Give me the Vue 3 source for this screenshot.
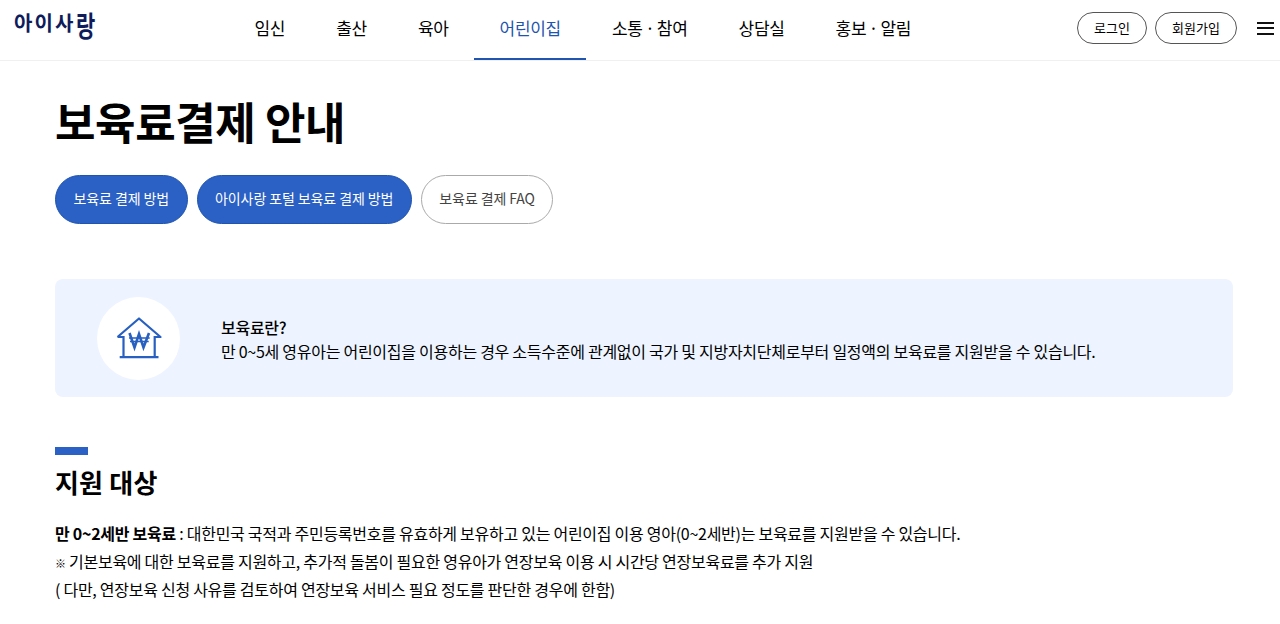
<script setup>
const menu = [
  { t: '임신' }, { t: '출산' }, { t: '육아' },
  { t: '어린이집', on: true }, { t: '소통 · 참여' }, { t: '상담실' }, { t: '홍보 · 알림' }
]
const tabs = [
  { t: '보육료 결제 방법', on: true }, { t: '아이사랑 포털 보육료 결제 방법', on: true }, { t: '보육료 결제 FAQ', on: false }
]
</script>

<template>
  <div class="page">
    <header class="head">
      <div class="logo">아이사<span class="logo-end">랑</span></div>
      <nav class="nav">
        <a v-for="m in menu" :key="m.t" class="item" :class="{ on: m.on }">{{ m.t }}</a>
      </nav>
      <div class="util">
        <a class="pill login">로그인</a>
        <a class="pill join">회원가입</a>
        <span class="burger"><i></i><i></i><i></i></span>
      </div>
    </header>
    <main class="main">
      <h1 class="title">보육료결제 안내</h1>
      <div class="tabs">
        <a v-for="b in tabs" :key="b.t" class="tab" :class="{ on: b.on }">{{ b.t }}</a>
      </div>
      <section class="info">
        <div class="circle">
          <svg width="46" height="42" viewBox="0 0 46 42" fill="none" stroke="#2760c0" stroke-width="2.2">
            <path d="M1.5 20 L23 1.5 L44.5 20 H38.7 M1.5 20 H7.5" stroke-linejoin="round" />
            <path d="M7.5 19 V40 M38.7 19 V40 M3.7 40.2 H42.5" />
            <path d="M13.5 16 L18.5 30.5 L23 17 L27.5 30.5 L33 16" stroke-width="2.6" />
            <path d="M13 21 H33.7 M14 24.5 H32.7" stroke-width="1.5" />
          </svg>
        </div>
        <div class="info-text">
          <p class="q">보육료란?</p>
          <p>만 0~5세 영유아는 어린이집을 이용하는 경우 소득수준에 관계없이 국가 및 지방자치단체로부터 일정액의 보육료를 지원받을 수 있습니다.</p>
        </div>
      </section>
      <div class="bar"></div>
      <h2 class="sub">지원 대상</h2>
      <div class="body">
        <p><b>만 0~2세반 보육료</b> : 대한민국 국적과 주민등록번호를 유효하게 보유하고 있는 어린이집 이용 영아(0~2세반)는 보육료를 지원받을 수 있습니다.</p>
        <p><span class="mark">※</span> 기본보육에 대한 보육료를 지원하고, 추가적 돌봄이 필요한 영유아가 연장보육 이용 시 시간당 연장보육료를 추가 지원</p>
        <p>( 다만, 연장보육 신청 사유를 검토하여 연장보육 서비스 필요 정도를 판단한 경우에 한함)</p>
      </div>
    </main>
  </div>
</template>

<style>
html, body { margin: 0; background: #fff; overflow: hidden; }
</style>

<style scoped>
.page {
  height: 624px;
  overflow: hidden;
  font-family: "Noto Sans CJK KR", "Noto Sans", sans-serif;
  color: #000;
}
.head {
  height: 60px;
  border-bottom: 1px solid #f0f0f0;
  display: flex;
  align-items: flex-start;
  position: relative;
}
.logo {
  width: 229px;
  padding: 8px 0 0 14px;
  box-sizing: border-box;
  flex: none;
  font-size: 20px;
  line-height: 30px;
  font-weight: 700;
  color: #0f1c5c;
  letter-spacing: 2.1px;
}
.logo-end {
  display: inline-block;
  transform: scale(1.05, 1.4);
  transform-origin: left 9px;
}
.nav { display: flex; flex: none; }
.item {
  height: 60px;
  box-sizing: border-box;
  padding: 0 25.5px;
  text-align: center;
  font-size: 17px;
  line-height: 56px;
  letter-spacing: -0.3px;
  word-spacing: -1px;
}
.item.on { color: #1f55ae; border-bottom: 2px solid #1f55ae; }
.util {
  margin-left: auto;
  display: flex;
  align-items: center;
  padding: 12px 6px 0 0;
}
.pill {
  height: 32px;
  box-sizing: border-box;
  border: 1px solid #555;
  border-radius: 16px;
  font-size: 13px;
  line-height: 29px;
  text-align: center;
}
.login { width: 70px; margin-right: 8px; }
.join { width: 82px; margin-right: 20px; }
.burger { width: 17px; display: flex; flex-direction: column; gap: 3.5px; }
.burger i { display: block; height: 2px; background: #111; }
.main { padding: 0 47px 0 55px; }
.title {
  margin: 29px 0 0;
  font-size: 44px;
  line-height: 62px;
  font-weight: 700;
  letter-spacing: -0.4px;
}
.tabs { display: flex; gap: 9px; margin-top: 23px; }
.tab {
  height: 49px;
  box-sizing: border-box;
  padding: 0 17.5px;
  border: 1px solid #aaa;
  border-radius: 25px;
  font-size: 14px;
  line-height: 45px;
  letter-spacing: -0.1px;
  color: #444;
}
.tab.on { background: #2b60c4; border-color: #1f55ae; color: #fff; }
.info {
  margin-top: 55px;
  height: 118px;
  background: #edf4ff;
  border-radius: 8px;
  display: flex;
  align-items: center;
  padding-left: 42px;
}
.circle {
  width: 83px;
  height: 83px;
  border-radius: 50%;
  background: #fff;
  display: flex;
  align-items: center;
  justify-content: center;
  margin-right: 41px;
  flex: none;
}
.info-text { font-size: 16px; line-height: 24px; letter-spacing: -0.27px; padding-top: 2px; }
.info-text p { margin: 0; }
.q { font-weight: 500; }
.bar { width: 33px; height: 8px; background: #2b60c4; margin-top: 50px; }
.sub { margin: 8px 0 0; font-size: 26px; line-height: 38px; font-weight: 700; letter-spacing: 0.2px; }
.body { margin-top: 18px; font-size: 16px; line-height: 28px; letter-spacing: -0.27px; }
.body p { margin: 0; }
.body b { font-weight: 700; }
.mark { font-size: 11px; font-weight: 700; line-height: 1; }
</style>
